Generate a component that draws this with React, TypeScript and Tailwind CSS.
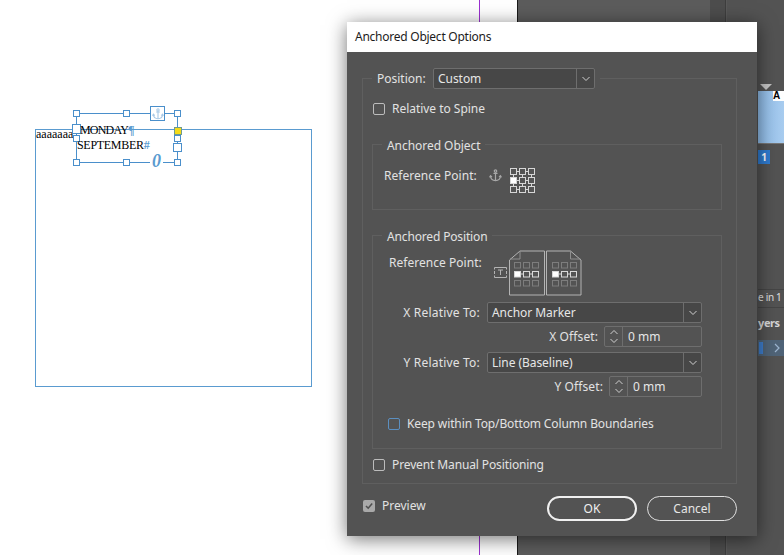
import React from "react";

const font = "[font-family:'Noto_Sans',sans-serif]";

function AnchorGlyph({ color, size = 14 }: { color: string; size?: number }) {
  return (
    <svg width={size} height={size} viewBox="0 0 14 14" fill="none" stroke={color} strokeWidth="1.3">
      <circle cx="7" cy="2.2" r="1.3" />
      <path d="M4.8 4.7H9.2M7 3.5V12.6" />
      <path d="M1.6 7.6C1.8 10.6 4.2 12.4 7 12.6C9.8 12.4 12.2 10.6 12.4 7.6" />
      <path d="M0.6 9L1.7 7.2L3.2 8.8M10.8 8.8L12.3 7.2L13.4 9" />
    </svg>
  );
}

function RefGrid() {
  const xs = [0.5, 9.5, 18.5];
  const ys = [0.5, 9.5, 18.5];
  return (
    <svg width="26" height="26" viewBox="0 0 26 26" fill="none" stroke="#d6d6d6" strokeWidth="1">
      <path d="M6.5 3.5H9.5M15.5 3.5H18.5M6.5 12.5H9.5M15.5 12.5H18.5M6.5 21.5H9.5M15.5 21.5H18.5M3.5 6.5V9.5M3.5 15.5V18.5M12.5 6.5V9.5M12.5 15.5V18.5M21.5 6.5V9.5M21.5 15.5V18.5" />
      {ys.map((y, r) =>
        xs.map((x, c) => (
          <rect key={`${r}-${c}`} x={x} y={y} width="6" height="6" fill={r === 1 && c === 0 ? "#ffffff" : "none"} />
        ))
      )}
    </svg>
  );
}

function PageRow({ x, y, on }: { x: number; y: number; on: boolean }) {
  return (
    <g stroke={on ? "#d8d8d8" : "#7d7d7d"}>
      {on && <path d={`M${x + 6.5} ${y + 3}H${x + 9}M${x + 15.5} ${y + 3}H${x + 18}`} />}
      <rect x={x + 0.5} y={y + 0.5} width="6" height="5.5" fill={on ? "#ffffff" : "none"} />
      <rect x={x + 9.5} y={y + 0.5} width="6" height="5.5" />
      <rect x={x + 18.5} y={y + 0.5} width="6" height="5.5" />
    </g>
  );
}

function PagesPicture() {
  return (
    <svg width="73" height="46" viewBox="0 0 73 46" fill="none" stroke="#b4b4b4" strokeWidth="1">
      <path d="M0.5 45V10L11 1H35.5V45Z" />
      <path d="M37.5 45V1H61.5L72 10V45Z" />
      <path d="M11 1V9H1" stroke="#8f8f8f" />
      <path d="M61.5 1V9H71.5" stroke="#8f8f8f" />
      <PageRow x={5} y={12} on={false} />
      <PageRow x={5} y={21} on={true} />
      <PageRow x={5} y={30} on={false} />
      <PageRow x={43} y={12} on={false} />
      <PageRow x={43} y={21} on={true} />
      <PageRow x={43} y={30} on={false} />
    </svg>
  );
}

function Check({ label, blue, checked, className, trk }: { label: string; blue?: boolean; checked?: boolean; className?: string; trk: string }) {
  return (
    <div className={`flex items-center gap-[7px] ${className ?? ""}`}>
      {checked ? (
        <div className="w-3 h-3 rounded-[2px] bg-[#a9a9a9] flex items-center justify-center">
          <svg width="10" height="10" viewBox="0 0 10 10" fill="none" stroke="#505050" strokeWidth="1.6">
            <path d="M2 5L4.2 7.2L8.2 2.6" />
          </svg>
        </div>
      ) : (
        <div className={`w-3 h-3 rounded-[2px] border ${blue ? "border-[#5b8fc0]" : "border-[#bcbcbc]"}`} />
      )}
      <span className={`text-[12px] leading-4 text-[#e2e2e2] whitespace-nowrap ${trk}`}>{label}</span>
    </div>
  );
}

function Chevron() {
  return (
    <svg width="10" height="6" viewBox="0 0 10 6" fill="none" stroke="#d0d0d0" strokeWidth="1">
      <path d="M1.5 1L5 4.5L8.5 1" />
    </svg>
  );
}

function Select({ value, className }: { value: string; className?: string }) {
  return (
    <div className={`h-[21px] flex items-center border border-[#6e6e6e] rounded-[2px] bg-[#474747] ${className ?? ""}`}>
      <span className="flex-1 pl-1 text-[12px] leading-4 tracking-[-0.05px] text-[#e6e6e6] whitespace-nowrap">{value}</span>
      <div className="w-[18px] h-full border-l border-[#6e6e6e] flex items-center justify-center">
        <Chevron />
      </div>
    </div>
  );
}

function Spinner({ className }: { className?: string }) {
  return (
    <div className={`h-[21px] flex items-center border border-[#6e6e6e] rounded-[2px] ${className ?? ""}`}>
      <div className="w-[18px] h-full border-r border-[#6e6e6e] flex flex-col items-center justify-center gap-[3px]">
        <svg width="10" height="6" viewBox="0 0 10 6" fill="none" stroke="#d0d0d0" strokeWidth="1">
          <path d="M1.5 5L5 1.5L8.5 5" />
        </svg>
        <Chevron />
      </div>
      <span className="pl-[5px] text-[12px] leading-4 text-[#e6e6e6]">0 mm</span>
    </div>
  );
}

function Label({ children, className }: { children: React.ReactNode; className?: string }) {
  return <span className={`text-[12px] leading-4 text-[#e2e2e2] whitespace-nowrap ${className ?? ""}`}>{children}</span>;
}

const handles: [number, number, number, number][] = [
  [73, 110, 7, 7],
  [123, 110, 7, 7],
  [174, 110, 7, 7],
  [72, 124, 9, 10],
  [73, 135, 7, 7],
  [174, 135, 7, 7],
  [173, 143, 9, 9],
  [73, 159, 7, 7],
  [123, 159, 7, 7],
  [174, 159, 7, 7],
];

function Canvas() {
  return (
    <div className="relative w-[517px] h-full bg-white overflow-hidden [font-family:'Liberation_Serif',serif] text-black">
      <div className="absolute left-[479px] top-0 bottom-0 w-px bg-[#9b30d0]" />
      <div className="absolute left-[35px] top-[129px] w-[277px] h-[258px] border border-[#5a9bd0]" />
      <div className="absolute left-[36px] top-[127px] text-[12px] leading-[14px]">aaaaaaa</div>
      <div className="absolute left-[76px] top-[113px] w-[102px] h-[50px] border border-[#4a8fcb]" />
      {handles.map(([x, y, w, h], i) => (
        <div
          key={i}
          className="absolute bg-white border border-[#4a8fcb]"
          style={{ left: x, top: y, width: w, height: h }}
        />
      ))}
      <div className="absolute left-[77px] top-[123px] text-[12px] leading-[15px] whitespace-nowrap">
        <div className="ml-[3px] tracking-[-0.8px]">
          MONDAY<span className="text-[#5a9bd0] font-bold">¶</span>
        </div>
        <div className="tracking-[-0.3px]">
          SEPTEMBER<span className="text-[#5a9bd0] font-bold">#</span>
        </div>
      </div>
      <div className="absolute left-[174px] top-[127px] w-2 h-2 bg-[#f5dc1a] border border-[#6f9a8e]" />
      <div className="absolute left-[150px] top-[106px] w-[15px] h-[15px] bg-white border border-[#4a8fcb] flex items-center justify-center">
        <AnchorGlyph color="#a9c9e6" size={12} />
      </div>
      <div className="absolute left-[150px] top-[153px] w-[13px] h-[17px] bg-white text-center text-[18px] leading-[17px] italic font-bold text-[#5a9bd0]">
        0
      </div>
    </div>
  );
}

function RightPanel() {
  return (
    <div className={`flex-1 h-full bg-[#535353] pl-[31px] flex flex-col overflow-hidden ${font}`}>
      <div className="h-[84px]" />
      <div className="h-[7px] pl-[2px] flex items-start">
        <div className="w-0 h-0 border-l-[6px] border-r-[6px] border-t-[6px] border-l-transparent border-r-transparent border-t-[#c4c4c4]" />
      </div>
      <div className="h-[53px] bg-gradient-to-r from-[#8fbce8] to-[#a9cdf0] flex flex-col items-end border-b border-[#777777]">
        <div className="w-[11px] h-[10px] bg-white text-[10px] leading-[10px] font-bold text-black [font-family:'Liberation_Sans',sans-serif]">A</div>
      </div>
      <div className="mt-[6px] w-3 h-[14px] bg-[#2f7bd0] text-white text-[10px] leading-[14px] font-bold text-center">1</div>
      <div className="h-[126px] border-b border-[#454545]" />
      <div className="h-[18px] border-b border-[#454545] text-[10px] leading-[15px] tracking-[-0.3px] text-[#e0e0e0] whitespace-nowrap">e in 1</div>
      <div className="h-[32px] text-[11px] leading-[30px] tracking-[-0.4px] font-bold text-[#d8d8d8]">yers</div>
      <div className="h-[16px] flex items-center bg-[#506478] pl-[1px]">
        <div className="w-1 h-3 bg-[#3f7fcf]" />
        <div className="flex-1 text-[#9db6d0] flex items-center pl-[11px]">
          <svg width="6" height="10" viewBox="0 0 6 10" fill="none" stroke="currentColor" strokeWidth="1.2">
            <path d="M1 1L5 5L1 9" />
          </svg>
        </div>
      </div>
    </div>
  );
}

function Dialog() {
  return (
    <div className={`absolute left-[347px] top-[22px] w-[410px] h-[514px] flex flex-col bg-[#535353] shadow-[0_3px_18px_rgba(0,0,0,0.55)] ${font}`}>
      <div className="h-[30px] shrink-0 bg-white pl-[8px] flex items-center text-[12px] tracking-[-0.25px] text-[#1c1c1c]">Anchored Object Options</div>
      <div className="flex-1 pl-[15px] pr-[20px] pt-[16px]">
        <fieldset className="border border-[#5f5f5f] h-[416px] pl-[9px] pr-[14px]">
          <legend className="px-[5px] flex items-center">
            <Label className="w-[56px] tracking-[0px]">Position:</Label>
            <Select value="Custom" className="w-[162px]" />
          </legend>
          <Check label="Relative to Spine" trk="tracking-[-0.03px]" className="mt-[12px] ml-px" />
          <fieldset className="mt-[15px] border border-[#5f5f5f] h-[78px] pl-[11px]">
            <legend className="-ml-[2px] px-[5px]">
              <Label className="tracking-[-0.05px]">Anchored Object</Label>
            </legend>
            <div className="flex items-start mt-[12px]">
              <Label className="w-[105px] tracking-[0.03px]">Reference Point:</Label>
              <div className="pt-[1px] w-[21px]">
                <AnchorGlyph color="#a8a8a8" size={13} />
              </div>
              <RefGrid />
            </div>
          </fieldset>
          <fieldset className="mt-[13px] border border-[#5f5f5f] h-[226px] pl-[16px] pr-[19px]">
            <legend className="-ml-[7px] px-[5px]">
              <Label className="tracking-[-0.15px]">Anchored Position</Label>
            </legend>
            <div className="flex items-start mt-[3px] h-[52px]">
              <Label className="w-[105px] pt-[5px] tracking-[0.03px]">Reference Point:</Label>
              <svg width="13" height="11" viewBox="0 0 13 11" fill="none" stroke="#b4b4b4" strokeWidth="1" className="mt-[17px]">
                <path d="M0.5 2.5V0.5H12.5V2.5M0.5 4V7M12.5 4V7M0.5 8.5V10.5H12.5V8.5" />
                <path d="M4 3H9M6.5 3V8" />
              </svg>
              <div className="ml-[2px]">
                <PagesPicture />
              </div>
            </div>
            <div className="flex flex-col items-end">
              <div className="flex items-center">
                <Label className="mr-[7px] tracking-[0.2px]">X Relative To:</Label>
                <Select value="Anchor Marker" className="w-[215px]" />
              </div>
              <div className="flex items-center mt-[3px]">
                <Label className="mr-[6px] tracking-[0.1px]">X Offset:</Label>
                <Spinner className="w-[98px]" />
              </div>
              <div className="flex items-center mt-[5px]">
                <Label className="mr-[7px] tracking-[0.2px]">Y Relative To:</Label>
                <Select value="Line (Baseline)" className="w-[215px]" />
              </div>
              <div className="flex items-center mt-[3px]">
                <Label className="mr-[6px] tracking-[0.1px]">Y Offset:</Label>
                <Spinner className="w-[93px]" />
              </div>
            </div>
            <Check label="Keep within Top/Bottom Column Boundaries" trk="tracking-[-0.12px]" blue className="mt-[19px] -ml-px" />
          </fieldset>
          <Check label="Prevent Manual Positioning" trk="tracking-[-0.12px]" className="mt-[8px] ml-px" />
        </fieldset>
        <div className="flex items-start justify-between mt-[12px] pl-px">
          <Check label="Preview" trk="tracking-[0px]" checked className="mt-[2px]" />
          <div className="flex gap-[10px]">
            <div className="w-[90px] h-[25px] rounded-full border-2 border-[#f0f0f0] text-[12px] leading-[21px] text-center text-[#f0f0f0]">OK</div>
            <div className="w-[90px] h-[25px] rounded-full border border-[#e0e0e0] text-[12px] leading-[23px] text-center text-[#e6e6e6]">Cancel</div>
          </div>
        </div>
      </div>
    </div>
  );
}

export default function App() {
  return (
    <div className="relative w-[784px] h-[555px] overflow-hidden flex">
      <Canvas />
      <div className="w-px h-full bg-[#1a1a1a]" />
      <div className="w-[192px] h-full bg-[#5c5c5c]" />
      <div className="w-[15px] h-full bg-[#4d4d4d]" />
      <div className="w-px h-full bg-[#3e3e3e]" />
      <div className="w-[1px] h-full bg-[#5a5a5a]" />
      <RightPanel />
      <Dialog />
    </div>
  );
}
